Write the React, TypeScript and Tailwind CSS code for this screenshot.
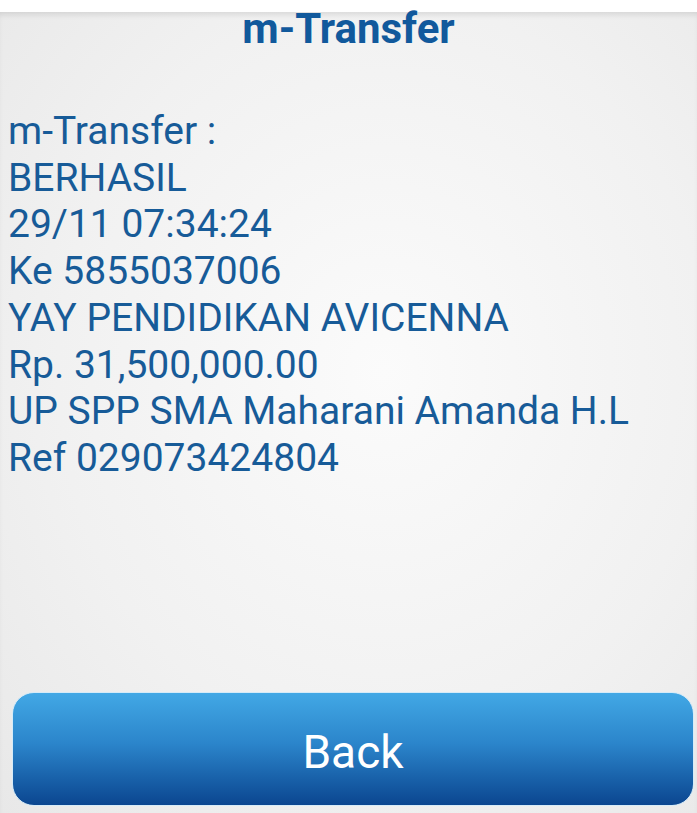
const lines = [
  "m-Transfer :",
  "BERHASIL",
  "29/11 07:34:24",
  "Ke 5855037006",
  "YAY PENDIDIKAN AVICENNA",
  "Rp. 31,500,000.00",
  "UP SPP SMA Maharani Amanda H.L",
  "Ref 029073424804",
];

export default function App() {
  return (
    <div className="w-[697px] h-[813px] bg-white flex flex-col font-['Roboto',sans-serif] overflow-hidden">
      <div className="h-[12px] bg-white shrink-0" />
      <div className="flex-1 flex flex-col bg-[radial-gradient(ellipse_at_55%_45%,#fbfbfb_0%,#f1f1f1_60%,#e8e8e8_100%)] shadow-[inset_0_5px_6px_-3px_rgba(0,0,0,0.12)]">
        <h1 className="pt-[2px] text-center text-[42px] leading-[30px] font-bold text-[#11599c]">
          m-Transfer
        </h1>

        <div className="mt-[64px] pl-[8px] text-[39px] leading-[46.7px] text-[#175b98]">
          {lines.map((line) => (
            <div key={line}>{line}</div>
          ))}
        </div>

        <div className="flex-1" />

        <button className="ml-[12px] mr-[3px] mb-[7px] h-[114px] rounded-[22px] border border-[#d6ebf8] bg-[linear-gradient(to_bottom,#42a8e5,#2b85cb_45%,#0b4690)] flex items-center justify-center pt-[6px] text-[46px] text-white">
          Back
        </button>
      </div>
    </div>
  );
}
